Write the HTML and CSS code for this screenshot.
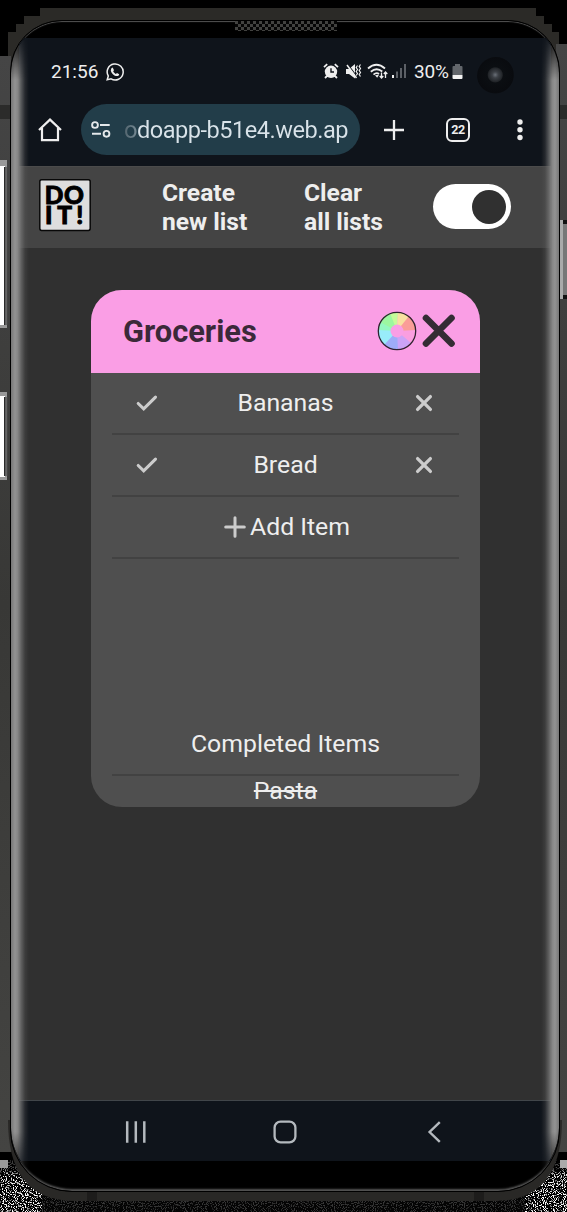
FILE: index.html
```html
<!DOCTYPE html>
<html lang="en">
<head>
<meta charset="utf-8">
<title>Do It!</title>
<link rel="stylesheet" href="styles.css">
</head>
<body>
<div class="stage">
  <svg class="backdrop" width="567" height="1212" viewBox="0 0 567 1212">
    <defs>
      <linearGradient id="side" x1="0" y1="0" x2="0" y2="1"><stop offset="0" stop-color="#454545"/><stop offset=".5" stop-color="#383836"/><stop offset="1" stop-color="#444442"/></linearGradient>
      <linearGradient id="key" x1="0" y1="0" x2="1" y2="0"><stop offset="0" stop-color="#111"/><stop offset=".5" stop-color="#777"/><stop offset="1" stop-color="#333"/></linearGradient>
      <filter id="grain" x="0" y="0" width="1" height="1"><feTurbulence type="fractalNoise" baseFrequency=".9" numOctaves="1" seed="4"/><feColorMatrix values="9 0 0 0 -4.8  9 0 0 0 -4.8  9 0 0 0 -4.8  0 0 0 0 1"/></filter>
      <radialGradient id="shade" cx=".5" cy="0" r="1"><stop offset="0" stop-color="#000"/><stop offset=".42" stop-color="#000" stop-opacity=".94"/><stop offset=".5" stop-color="#000" stop-opacity=".7"/><stop offset=".58" stop-color="#000" stop-opacity="0"/></radialGradient>
    </defs>
    <rect width="567" height="1212" fill="#000"/>
    <path d="M40 8H536V16H544V24H552V32H559V44H567V1160H0V56H8V32H16V24H24V16H40Z" fill="#2b2a27"/>
    <rect y="56" width="11" height="1096" fill="url(#side)"/>
    <rect x="556" y="44" width="11" height="1108" fill="url(#side)"/>
    <rect y="105" width="10" height="14" fill="#2b2b2a"/>
    <rect x="560" y="105" width="7" height="14" fill="#2b2b2a"/>
    <rect y="160" width="7" height="168" fill="#999"/><rect y="166" width="5" height="159" fill="#fff"/><rect x="4" y="167" width="4" height="158" fill="url(#key)"/>
    <rect y="392" width="7" height="88" fill="#999"/><rect y="396" width="5" height="81" fill="#fff"/><rect x="4" y="397" width="4" height="79" fill="url(#key)"/>
    <rect x="560" y="220" width="3" height="79" fill="#aaa"/><rect x="563" y="220" width="4" height="79" fill="#777"/><path d="M563 220h4v4h-4zM563 295h4v4h-4z" fill="#111"/>
    <rect y="1152" width="567" height="8" fill="#000"/>
    <rect y="1160" width="567" height="52" filter="url(#grain)"/>
    <rect y="1160" width="567" height="52" fill="url(#shade)"/>
    <path d="M42 1182H525V1212H42Z" fill="#050505" opacity=".8"/>
    <rect x="0" y="1160" width="8" height="8" fill="#999"/><rect x="560" y="1160" width="7" height="8" fill="#aaa"/>
    <path d="M8 1120H562C562 1170 543 1201 495 1201H75C27 1201 8 1170 8 1120Z" fill="#292826"/>
    <path d="M87 1192h10v9H87zM474 1192h10v9h-10z" fill="#1d1c1b"/>
  </svg>

  <div class="phone">
    <div class="speaker"></div>
    <div class="screen">
      <header class="status">
        <span class="time">21:56</span>
        <svg class="whatsapp" width="18" height="18" viewBox="0 0 18 18"><path d="M1.2 16.8 2.3 13A8 8 0 1 1 5.1 15.8Z" fill="none" stroke="#eee" stroke-width="1.5"/><path d="M5.4 5.2 6.7 4.6 8 7.2 7.2 8.3C7.8 9.6 8.7 10.4 9.9 11L11 10 13.2 11.2C13 12.8 11.6 13.4 10 13 7.4 12.3 5 9.7 4.8 7.2Z" fill="#eee"/></svg>
        <div class="indicators">
          <svg width="84" height="17" viewBox="0 0 84 17">
            <circle cx="8" cy="8.8" r="6.2" fill="#eee"/><path d="M1 4.2 4.2 1.2M11.8 1.2 15 4.2M4 13 2 15M12 13 14 15" stroke="#eee" stroke-width="1.8"/><path d="M8 5.3V9H11" fill="none" stroke="#10151c" stroke-width="1.4"/>
            <path d="M23 6H26L32 1V15.5L26 11H23Z" fill="#eee"/><path d="M25 1.5 35 15" stroke="#10151c" stroke-width="1.2"/><path d="M24 2 33.5 15" stroke="#eee" stroke-width="1.5"/><path d="M34.5 2.5 33.2 4.5 34.5 6.5 33.2 8.5 34.5 10.5 33.2 12.5M37.5 1.5 36.2 3.5 37.5 5.5 36.2 7.5 37.5 9.5 36.2 11.5 37.5 13.5" fill="none" stroke="#eee" stroke-width="1.2"/>
            <path d="M45 5.5Q53.5-2 62 5.5M47.8 8.7Q53.5 3.8 59.3 8.5M50.5 11.7Q53.5 9 56 11" fill="none" stroke="#eee" stroke-width="1.8"/><path d="M52 12.2 56 11.8 54.2 14.8Z" fill="#eee"/><path d="M58.5 9.5V15M56.7 13 58.5 15 60.3 13M62.5 15V9M60.8 11 62.5 9 64.3 11" fill="none" stroke="#eee" stroke-width="1.3"/>
            <path d="M69 12H71V15H69Z" fill="#eee"/><path d="M73 8.5H75V15H73ZM77 5H79V15H77ZM81 1H83V15H81Z" fill="#5c6066"/>
          </svg>
          <span class="percent">30%</span>
          <svg width="11" height="17" viewBox="0 0 11 17"><path d="M3 1H8V3H9.5Q10.5 3 10.5 4V12H.5V4Q.5 3 1.5 3H3Z" fill="#62666b"/><path d="M.5 12H10.5V15Q10.5 16 9.5 16H1.5Q.5 16 .5 15Z" fill="#f2f2f2"/></svg>
        </div>
        <span class="camera"></span>
      </header>

      <div class="browser">
        <svg width="24" height="24" viewBox="0 0 24 24"><path d="M1 12 12 1.6 23 12M4 10V22.2H20V10" fill="none" stroke="#eee" stroke-width="2.2"/></svg>
        <div class="address">
          <svg width="20" height="17" viewBox="0 0 20 17"><g fill="none" stroke="#e4e8ea" stroke-width="1.9"><circle cx="4" cy="4" r="2.9"/><path d="M9 4H18.7M1 12.8H10"/><circle cx="15.5" cy="12.8" r="2.9"/></g></svg>
          <span class="url">odoapp-b51e4.web.ap</span>
        </div>
        <svg class="new-tab" width="22" height="22" viewBox="0 0 22 22"><path d="M11 1V21M1 11H21" stroke="#eee" stroke-width="2.3"/></svg>
        <span class="tabs">22</span>
        <svg class="more" width="6" height="22" viewBox="0 0 6 22" fill="#eee"><circle cx="3" cy="3" r="2.7"/><circle cx="3" cy="10.7" r="2.7"/><circle cx="3" cy="18.5" r="2.7"/></svg>
      </div>

      <nav class="nav">
        <svg class="logo" width="52" height="53" viewBox="0 0 52 53"><rect x=".8" y=".8" width="50.4" height="50.6" rx="1.8" fill="#dedede" stroke="#080808" stroke-width="1.5"/><g class="logo-text"><text x="5.7 25" y="25.2">DO</text><text x="6 18.2 37.2" y="45.4">IT!</text></g></svg>
        <a class="link create">Create<br>new list</a>
        <a class="link clear">Clear<br>all lists</a>
        <span class="toggle"><span class="knob"></span></span>
      </nav>

      <main class="main">
        <section class="card">
          <div class="card-head">
            <h1 class="title">Groceries</h1>
            <svg width="40" height="40" viewBox="0 0 40 40">
              <g transform="translate(20 20)">
                <path d="M0 0-8-17A19 19 0 0 1 1-19Z" fill="#c5fb9a"/><path d="M0 0 1-19A19 19 0 0 1 13-14Z" fill="#f8e0a0"/><path d="M0 0 12-15A19 19 0 0 1 19 0Z" fill="#fa9d98"/><path d="M0 0 19-1A19 19 0 0 1 14 13Z" fill="#fa9ee0"/><path d="M0 0 14 12A19 19 0 0 1 0 19Z" fill="#cba3f7"/><path d="M0 0 1 19A19 19 0 0 1-14 13Z" fill="#9eacf8"/><path d="M0 0-13 14A19 19 0 0 1-19-3Z" fill="#98ecfa"/><path d="M0 0-19-1A19 19 0 0 1-16-10Z" fill="#94f8c0"/><path d="M0 0-17-9A19 19 0 0 1-7-18Z" fill="#9cf7a0"/>
                <circle r="6.5" fill="#fa9ee5"/><circle r="18.7" fill="none" stroke="#30222f" stroke-width="1.3"/>
              </g>
            </svg>
            <svg class="remove" width="34" height="34" viewBox="0 0 34 34"><path d="M4 4 29.5 29.5M29.5 4 4 29.5" stroke="#342c34" stroke-width="6.6" stroke-linecap="round"/></svg>
          </div>
          <ul class="items">
            <li class="item">
              <svg width="22" height="18" viewBox="0 0 22 18"><path d="M2.2 9.5 7.7 14.8 19.5 3.2" fill="none" stroke="#ccc" stroke-width="3.1" stroke-linecap="round"/></svg>
              <span>Bananas</span>
              <svg width="22" height="18" viewBox="0 0 22 18"><path d="M4.6 2.6 17.4 15.4M17.4 2.6 4.6 15.4" stroke="#ccc" stroke-width="3.3" stroke-linecap="round"/></svg>
            </li>
            <li class="item">
              <svg width="22" height="18" viewBox="0 0 22 18"><path d="M2.2 9.5 7.7 14.8 19.5 3.2" fill="none" stroke="#ccc" stroke-width="3.1" stroke-linecap="round"/></svg>
              <span>Bread</span>
              <svg width="22" height="18" viewBox="0 0 22 18"><path d="M4.6 2.6 17.4 15.4M17.4 2.6 4.6 15.4" stroke="#ccc" stroke-width="3.3" stroke-linecap="round"/></svg>
            </li>
            <li class="item add">
              <svg width="22" height="22" viewBox="0 0 22 22"><path d="M11 1.7V20.3M1.7 11H20.3" stroke="#ccc" stroke-width="3" stroke-linecap="round"/></svg>
              <span>Add Item</span>
            </li>
          </ul>
          <div class="completed">
            <h2 class="completed-title">Completed Items</h2>
            <p class="done">Pasta</p>
          </div>
        </section>
      </main>

      <footer class="system">
        <svg width="22" height="24" viewBox="0 0 22 24"><path d="M2.2 1.3V22.7M10.8 1.3V22.7M19.3 1.3V22.7" stroke="#b4b9be" stroke-width="2.5"/></svg>
        <svg class="home" width="24" height="24" viewBox="0 0 24 24"><rect x="1.6" y="1.6" width="20.8" height="20.8" rx="6" fill="none" stroke="#b4b9be" stroke-width="2.3"/></svg>
        <svg width="16" height="24" viewBox="0 0 16 24"><path d="M13.8 2.2 3.6 12 13.8 21.8" fill="none" stroke="#b4b9be" stroke-width="2.4"/></svg>
      </footer>
    </div>
  </div>
</div>
</body>
</html>
```
FILE: styles.css
```css
* { box-sizing: border-box; }
body { margin: 0; background: #000; font-family: Roboto, "Liberation Sans", sans-serif; color: #eee; }
svg { display: block; flex: none; }
.stage { position: relative; width: 567px; height: 1212px; overflow: hidden; padding: 20px 7px 20px 10px; }
.backdrop { position: absolute; inset: 0; }
.phone { position: relative; height: 1172px; padding: 17px 8px 0; overflow: hidden; background: #000; border: 1px solid #000; border-radius: 52px 52px 62px 62px; box-shadow: inset 0 1px 1px #555, inset 0 -3px 2px -1px #555; }
.phone::after { content: ""; position: absolute; inset: 1px 0 2px; border-radius: 51px 51px 61px 61px; pointer-events: none; background:
  linear-gradient(90deg, #777 0, #939393 4px, #858585 7px, rgba(120,120,120,.7) 10px, rgba(90,90,90,.3) 14px, transparent 18px) left / 19px 100% no-repeat,
  linear-gradient(270deg, #777 0, #939393 4px, #858585 7px, rgba(120,120,120,.7) 10px, rgba(90,90,90,.3) 14px, transparent 18px) right / 19px 100% no-repeat;
  -webkit-mask-image: linear-gradient(transparent 10px, #000 58px, #000 1110px, transparent 1160px); mask-image: linear-gradient(transparent 10px, #000 58px, #000 1110px, transparent 1160px); }
.speaker { position: absolute; top: 0; left: 224px; width: 102px; height: 10px; background: repeating-conic-gradient(#050505 0 25%, #424240 0 50%) 0 0 / 6px 6px; }
.screen { display: flex; flex-direction: column; width: 532px; height: 1123px; background: #303030; }
.status { display: flex; align-items: center; height: 67px; padding-left: 32px; background: #0f141b; }
.time { width: 55px; font-size: 19px; }
.indicators { display: flex; align-items: center; margin-left: 199px; }
.percent { width: 38px; margin-left: 7px; font-size: 19px; letter-spacing: -.2px; }
.camera { width: 38px; height: 38px; margin: 9px 0 0 14px; border-radius: 50%; background: radial-gradient(circle at 48% 47%, #6a7078 0, #3c4046 3px, #222529 7px, #0b0e12 8px, #090b0f 18px, #0f141b 19px); }
.browser { display: flex; align-items: center; height: 61px; padding: 0 0 12px 19px; background: #0f141b; }
.address { display: flex; align-items: center; width: 279px; height: 51px; margin-left: 19px; padding-left: 10px; border-radius: 26px; background: #223d49; }
.url { margin-left: 13px; font-size: 23.6px; letter-spacing: -.5px; white-space: nowrap; color: transparent; background: linear-gradient(90deg, #51636c 0, #738791 12px, #d9e3e9 14px); -webkit-background-clip: text; background-clip: text; }
.new-tab { margin-left: 23px; }
.tabs { display: grid; place-items: center; width: 24px; height: 24px; margin-left: 41px; border: 2.3px solid #eee; border-radius: 6px; font-size: 12.5px; font-weight: 700; line-height: 18px; letter-spacing: -.4px; }
.more { margin-left: 47px; }
.nav { display: flex; align-items: center; height: 82px; padding: 0 0 2px 20px; background: #444; border-top: 1px solid #4b4b4b; }
.logo { margin-top: -3px; }
.logo-text { font: 900 24.5px Lato, sans-serif; fill: #000; stroke: #000; stroke-width: .9px; }
.link { font-size: 24.6px; line-height: 29px; font-weight: 700; white-space: nowrap; }
.create { width: 142px; margin-left: 71px; }
.clear { width: 129px; }
.toggle { display: flex; align-items: center; justify-content: flex-end; width: 78px; height: 45px; padding-right: 5px; border-radius: 23px; background: #fff; }
.knob { width: 34px; height: 34px; border-radius: 50%; background: #303030; }
.main { flex: 1; padding: 42px 71px 0 72px; }
.card { display: flex; flex-direction: column; height: 517px; overflow: hidden; border-radius: 31px; background: #4f4f4f; }
.card-head { display: flex; align-items: center; height: 83px; padding: 0 24px 1px 32px; background: #fa9ee5; }
.title { flex: 1; margin: 0; font-size: 30.8px; font-weight: 700; color: #3b2939; }
.remove { margin-left: 5px; }
.items { margin: 0; padding: 0 21px; list-style: none; }
.item { display: flex; align-items: center; justify-content: space-between; height: 62px; padding: 0 24px 1px; border-bottom: 2px solid #424242; font-size: 24.8px; }
.item.add { justify-content: center; gap: 4px; padding-left: 27px; }
.completed { margin: auto 21px 0; text-align: center; font-size: 24.8px; }
.completed-title { height: 62px; margin: 0; border-bottom: 2px solid #424242; font-size: 24.8px; font-weight: 400; line-height: 60px; }
.done { height: 31px; margin: 0; line-height: 29px; text-decoration: line-through; }
.system { display: flex; align-items: center; justify-content: space-between; height: 61px; padding: 1px 109px 0 106px; border-top: 1px solid #41464a; background: #0f141b; }
.home { margin-right: 4px; }
```
